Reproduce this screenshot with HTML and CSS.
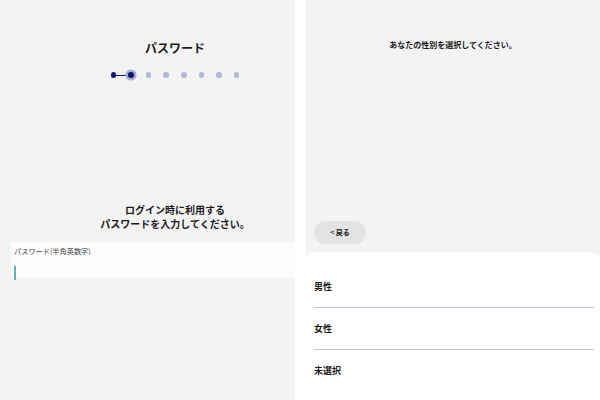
FILE: index.html
```html
<!DOCTYPE html>
<html>
    <head>
        <title>会員登録</title>
        <meta charset="UTF-8">
        <meta name="viewport" content="width=device-width, initial-scale=1.0">
        <link rel="stylesheet" href="styles.css">
    </head>
    <body>
        <div class="screenClip">
            <div class="screen">
                <h1 class="pageTitle">パスワード</h1>
                <div class="steps">
                    <span class="step done"><i></i></span>
                    <span class="step current"><i></i></span>
                    <span class="step"><i></i></span>
                    <span class="step"><i></i></span>
                    <span class="step"><i></i></span>
                    <span class="step"><i></i></span>
                    <span class="step"><i></i></span>
                    <span class="step"><i></i></span>
                </div>
                <p class="prompt">ログイン時に利用する<br>パスワードを入力してください。</p>
                <div class="field">
                    <label for="password">パスワード(半角英数字)</label>
                    <span class="caret"></span>
                </div>
            </div>
        </div>

        <div class="screen right">
            <p class="question">あなたの性別を選択してください。</p>
            <div class="backButton">&lt; 戻る</div>
            <div class="sheet">
                <div class="option">男性</div>
                <div class="option">女性</div>
                <div class="option last">未選択</div>
            </div>
        </div>
    </body>
</html>
```

FILE: styles.css
```css
body{
    margin: 0;
    display: flex;
    gap: 11px;
    background-color: #ffffff;
    font-family: "Noto Sans CJK JP", "Noto Sans", sans-serif;
    color: #1a1a1a;
}

.screenClip{
    width: 295px;
    height: 400px;
    overflow: hidden;
    background-color: #f3f3f3;
}
.screen{
    width: 350px;
    height: 400px;
    display: flex;
    flex-direction: column;
    background-color: #f3f3f3;
}
.pageTitle{
    margin: 40px 0 0 0;
    font-size: 12px;
    line-height: 16px;
    font-weight: bold;
    text-align: center;
}

/* progress dots */
.steps{
    display: flex;
    justify-content: center;
    margin-top: 14px;
    height: 10px;
}
.step{
    position: relative;
    width: 17.6px;
    display: flex;
    align-items: center;
    justify-content: center;
}
.step i{
    display: block;
    width: 5.5px;
    height: 5.5px;
    border-radius: 50%;
    background-color: #b3b7d6;
}
.step.done i,
.step.current i{
    background-color: #0f1c6d;
}
.step.current i{
    box-shadow: 0 0 0 2.5px #a7acd2;
}
.step.done::after{
    content: "";
    position: absolute;
    left: 50%;
    top: 4.5px;
    width: 17.6px;
    height: 1px;
    background-color: #0f1c6d;
}

.prompt{
    margin: 123px 0 0 0;
    font-size: 10px;
    line-height: 14px;
    font-weight: bold;
    text-align: center;
}
.field{
    margin: 11px 11px 0 11px;
    height: 36px;
    background-color: #fcfcfc;
    padding: 5px 3px 0 3px;
    box-sizing: border-box;
}
.field label{
    display: block;
    font-size: 7.2px;
    line-height: 9px;
    color: #444444;
}
.caret{
    display: block;
    margin-top: 10px;
    width: 2px;
    height: 14px;
    background-color: #5db5a4;
}

.screen.right{
    width: 294px;
}
.question{
    margin: 39px 0 0 0;
    font-size: 8px;
    line-height: 12px;
    font-weight: bold;
    text-align: center;
}
.backButton{
    margin: 170px 0 0 8px;
    width: 52px;
    height: 23px;
    border-radius: 12px;
    background-color: #e3e3e3;
    font-size: 7px;
    font-weight: bold;
    line-height: 23px;
    text-align: center;
}
.sheet{
    margin-top: 8px;
    flex: 1;
    background-color: #ffffff;
    border-radius: 8px 8px 0 0;
    padding-top: 14px;
}
.option{
    margin: 0 6px 0 8px;
    height: 41px;
    line-height: 41px;
    font-size: 9px;
    font-weight: bold;
    border-bottom: 1px solid #bfc3e0;
}
.option.last{
    border-bottom: none;
}
```
